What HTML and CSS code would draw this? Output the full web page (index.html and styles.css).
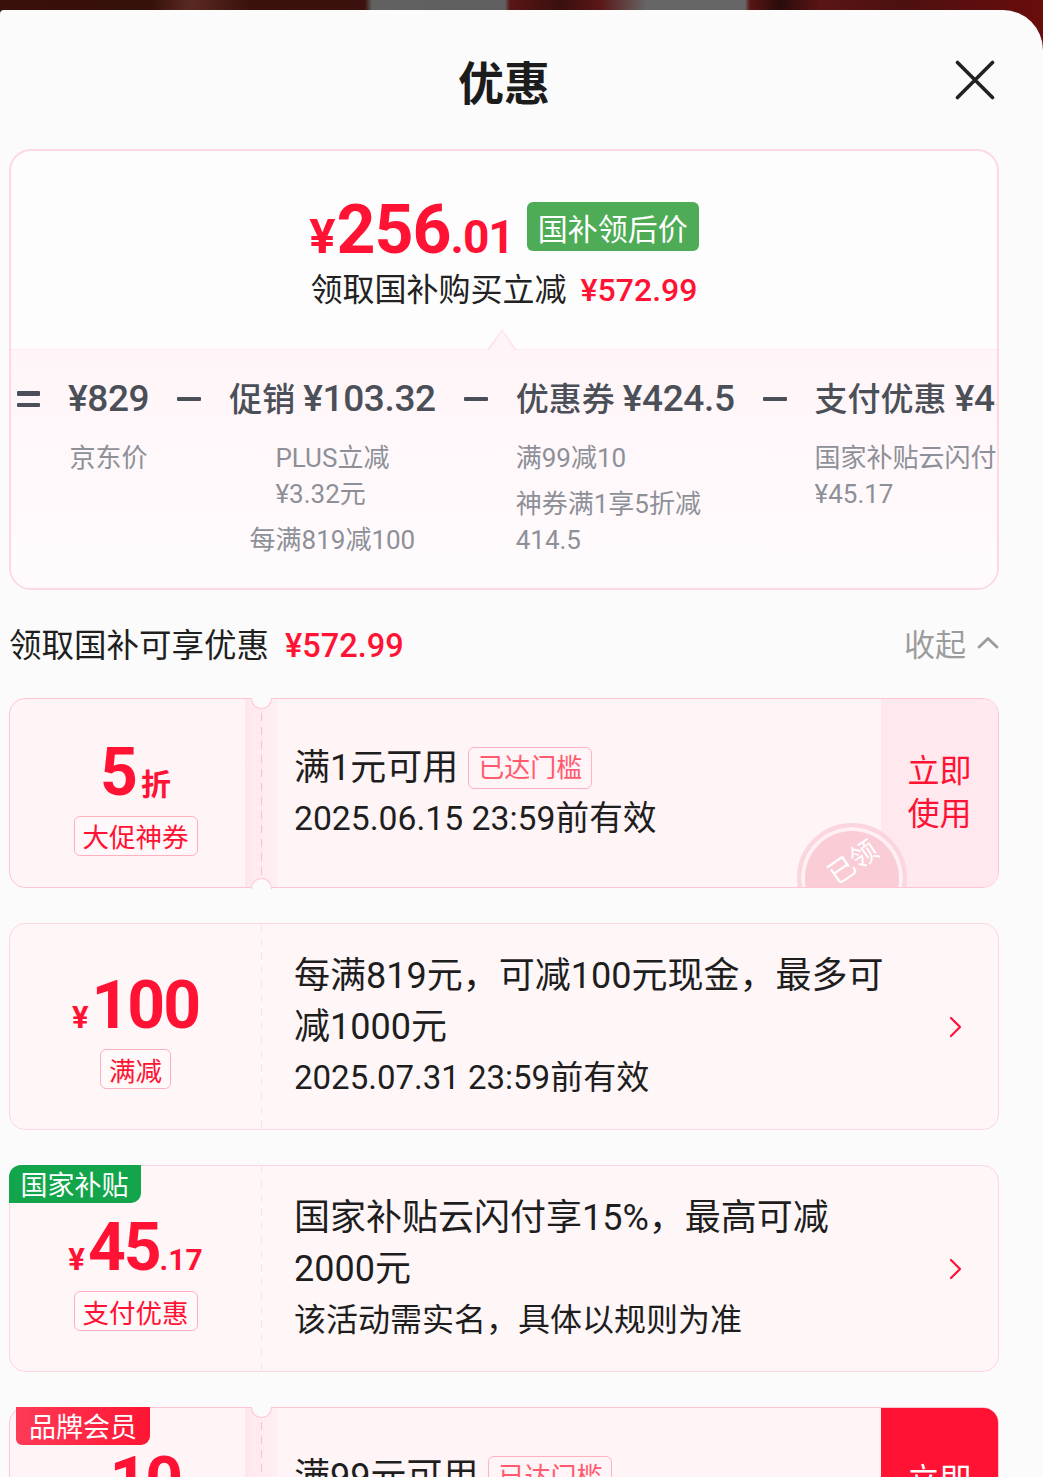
FILE: index.html
```html
<!DOCTYPE html>
<html lang="zh-CN">
<head>
<meta charset="utf-8">
<title>优惠</title>
<link rel="stylesheet" href="styles.css">
</head>
<body>
<div class="sheet">
  <header class="hd">
    <div></div>
    <h1 class="title">优惠</h1>
    <button class="close" aria-label="关闭">
      <svg width="40" height="40" viewBox="0 0 40 40"><path d="M2.5 2.5 L37.5 37.5 M37.5 2.5 L2.5 37.5" stroke="#222" stroke-width="3.6" stroke-linecap="round" fill="none"/></svg>
    </button>
  </header>

  <section class="summary">
    <div class="sum-top">
      <div class="price-row">
        <span class="price"><span class="p-yen">¥</span><span class="p-int">256</span><span class="p-dec">.01</span></span>
        <span class="badge-green">国补领后价</span>
      </div>
      <div class="save-line">领取国补购买立减 <span class="save-amt">¥572.99</span></div>
    </div>
    <div class="sum-bottom">
      <div class="bd">
        <div class="op eq"><span></span><span></span></div>
        <div class="col c-center">
          <div class="main"><span class="n">¥829</span></div>
          <div class="subs"><div class="sub">京东价</div></div>
        </div>
        <div class="op"><span></span></div>
        <div class="col c-center">
          <div class="main">促销 <span class="n">¥103.32</span></div>
          <div class="subs">
            <div class="sub">PLUS立减<br>¥3.32元</div>
            <div class="sub">每满819减100</div>
          </div>
        </div>
        <div class="op"><span></span></div>
        <div class="col">
          <div class="main">优惠券 <span class="n">¥424.5</span></div>
          <div class="subs">
            <div class="sub">满99减10</div>
            <div class="sub">神券满1享5折减<br>414.5</div>
          </div>
        </div>
        <div class="op"><span></span></div>
        <div class="col">
          <div class="main">支付优惠 <span class="n">¥45.17</span></div>
          <div class="subs">
            <div class="sub">国家补贴云闪付<br>¥45.17</div>
          </div>
        </div>
      </div>
    </div>
  </section>

  <div class="sec-hd">
    <div class="sec-title">领取国补可享优惠 <span class="sec-amt">¥572.99</span></div>
    <div class="collapse">收起
      <svg width="22" height="13" viewBox="0 0 22 13"><polyline points="2,11 11,2.5 20,11" fill="none" stroke="#9c9c9c" stroke-width="2.8" stroke-linecap="round" stroke-linejoin="round"/></svg>
    </div>
  </div>

  <div class="list">
    <!-- coupon 1 -->
    <div class="coupon c-ticket c-action">
      <span class="notch top"></span><span class="notch bottom"></span>
      <div class="stub band">
        <div class="amount"><span class="a-big">5</span><span class="a-unit">折</span></div>
        <span class="tag">大促神券</span>
      </div>
      <div class="body">
        <div class="l1">满1元可用<span class="tag-lite">已达门槛</span></div>
        <div class="l2 wide">2025.06.15 23:59前有效</div>
      </div>
      <div class="action soft">立即<br>使用</div>
      <div class="stamp"><span>已领</span></div>
    </div>

    <!-- coupon 2 -->
    <div class="coupon c-tall">
      <div class="stub faint">
        <div class="amount"><span class="a-yen">¥</span><span class="a-big">100</span></div>
        <span class="tag">满减</span>
      </div>
      <div class="body">
        <div class="l1">每满819元，可减100元现金，最多可减1000元</div>
        <div class="l2">2025.07.31 23:59前有效</div>
      </div>
      <div class="arrow">
        <svg width="13" height="22" viewBox="0 0 13 22"><polyline points="2,2 11,11 2,20" fill="none" stroke="#ff1233" stroke-width="2.2" stroke-linecap="round" stroke-linejoin="round"/></svg>
      </div>
    </div>

    <!-- coupon 3 -->
    <div class="coupon c-tall">
      <span class="corner green">国家补贴</span>
      <div class="stub faint">
        <div class="amount"><span class="a-yen">¥</span><span class="a-big">45</span><span class="a-dec">.17</span></div>
        <span class="tag">支付优惠</span>
      </div>
      <div class="body">
        <div class="l1">国家补贴云闪付享15%，最高可减2000元</div>
        <div class="l2 note">该活动需实名，具体以规则为准</div>
      </div>
      <div class="arrow">
        <svg width="13" height="22" viewBox="0 0 13 22"><polyline points="2,2 11,11 2,20" fill="none" stroke="#ff1233" stroke-width="2.2" stroke-linecap="round" stroke-linejoin="round"/></svg>
      </div>
    </div>

    <!-- coupon 4 -->
    <div class="coupon c-ticket c-action">
      <span class="notch top"></span><span class="notch bottom"></span>
      <span class="corner red">品牌会员</span>
      <div class="stub band">
        <div class="amount"><span class="a-yen">¥</span><span class="a-big">10</span></div>
        <span class="tag">店铺券</span>
      </div>
      <div class="body">
        <div class="l1">满99元可用<span class="tag-lite">已达门槛</span></div>
        <div class="l2">2025.06.30 23:59前有效</div>
      </div>
      <div class="action solid">立即<br>领取</div>
    </div>
  </div>
</div>
</body>
</html>
```

FILE: styles.css
```css
* { box-sizing: border-box; }

body {
  margin: 0;
  width: 1043px;
  height: 1477px;
  overflow: hidden;
  font-family: Roboto, "Noto Sans CJK SC", sans-serif;
  color: #1e1e1e;
  background:
    linear-gradient(90deg,
      #3a100b 0px, #35100b 150px, #5a2a22 190px, #3a110c 250px,
      #3b120d 365px, #616161 372px, #5f5f5f 505px, #5a1616 510px,
      #3a0f0e 560px, #5a1717 600px, #666 647px, #666 745px,
      #5a1515 750px, #2a0b0b 780px, #5a1515 820px, #4d1010 900px, #6a0c0c 1043px);
}

.sheet {
  margin-top: 10px;
  height: 1467px;
  background: #fbfbfb;
  border-radius: 4px 40px 0 0;
  padding: 0 44px 0 9px;
}

/* header */
.hd {
  display: grid;
  grid-template-columns: 1fr auto 1fr;
  align-items: center;
  height: 139px;
}
.title {
  margin: 0;
  font-size: 46px;
  line-height: 48px;
  font-weight: 700;
  color: #1c1c1c;
  font-family: "Noto Sans CJK SC", sans-serif;
}
.close {
  justify-self: end;
  margin-right: 4px;
  width: 40px;
  height: 40px;
  padding: 0;
  border: 0;
  background: none;
  display: flex;
}

/* summary card */
.summary {
  border: 2px solid #ffd9e2;
  border-radius: 22px;
  overflow: hidden;
  background: #fdfdfd;
}
.sum-top {
  padding: 49px 0 37px;
  text-align: center;
}
.price-row {
  display: flex;
  justify-content: center;
  align-items: flex-start;
  gap: 13px;
  height: 60px;
}
.price {
  color: #ff1233;
  font-weight: 700;
  font-size: 68px;
  line-height: 60px;
  white-space: nowrap;
}
.p-yen { font-size: 49px; line-height: 1; margin-right: 1px; }
.p-int { letter-spacing: -1px; }
.p-dec { font-size: 46px; line-height: 1; letter-spacing: -1px; }
.badge-green {
  margin-top: 2px;
  height: 49px;
  padding: 0 11px;
  display: inline-flex;
  align-items: center;
  border-radius: 6px;
  background: #4eab56;
  color: #fff;
  font-size: 30px;
  font-family: "Noto Sans CJK SC", sans-serif;
}
.save-line {
  margin-top: 8px;
  font-size: 32px;
  line-height: 44px;
  color: #222;
}
.save-amt {
  color: #ff1233;
  font-weight: 500;
  margin-left: 6px;
}

.sum-bottom {
  position: relative;
  border-top: 1px solid #ffeaf0;
  background: linear-gradient(#fff5f8, #fffbfc);
  padding: 26px 0 30px;
}
.sum-bottom::before,
.sum-bottom::after {
  content: "";
  position: absolute;
  left: 50%;
  clip-path: polygon(50% 0, 100% 100%, 0 100%);
}
.sum-bottom::before {
  top: -21px;
  width: 30px;
  height: 21px;
  margin-left: -17px;
  background: #ffe3ea;
}
.sum-bottom::after {
  top: -19px;
  width: 26px;
  height: 20px;
  margin-left: -15px;
  background: #fff5f8;
}

.bd {
  display: flex;
  align-items: flex-start;
  gap: 28px;
  padding-left: 6px;
  white-space: nowrap;
  overflow: hidden;
}
.op {
  height: 46px;
  width: 24px;
  flex: none;
  display: flex;
  flex-direction: column;
  justify-content: center;
  gap: 7px;
}
.op span {
  display: block;
  height: 4.5px;
  background: #4b4f58;
  border-radius: 1px;
}
.op.eq { width: 23px; }
.col {
  flex: none;
  display: flex;
  flex-direction: column;
  align-items: flex-start;
}
.col.c-center { align-items: center; }
.main {
  font-size: 33px;
  line-height: 46px;
  font-weight: 500;
  color: #4b4f58;
}
.main .n { font-size: 37px; letter-spacing: -0.4px; }
.subs {
  margin-top: 17px;
  display: flex;
  flex-direction: column;
  gap: 10px;
}
.c-center .subs { align-items: center; }
.sub {
  font-size: 26px;
  line-height: 36px;
  color: #8d9098;
}

/* section header */
.sec-hd {
  margin: 30px 0 34px;
  height: 44px;
  display: flex;
  align-items: center;
  justify-content: space-between;
}
.sec-title {
  font-size: 32.5px;
  color: #1f1f1f;
}
.sec-amt {
  color: #ff1233;
  font-weight: 500;
  margin-left: 8px;
}
.collapse {
  display: flex;
  align-items: center;
  gap: 11px;
  font-size: 31px;
  color: #9c9c9c;
}

/* coupons */
.list {
  display: flex;
  flex-direction: column;
  gap: 35px;
}
.coupon {
  position: relative;
  display: grid;
  grid-template-columns: 251px 1fr 100px;
  height: 207px;
  border: 1.5px solid #ffd6de;
  border-radius: 16px;
  background: #fff6f8;
}
.coupon.c-ticket {
  height: 190px;
  border-color: #ffc6d2;
  background: #fff4f6;
}
.coupon.c-action { grid-template-columns: 251px 1fr 117px; }

.notch {
  position: absolute;
  left: 241px;
  width: 21px;
  height: 11px;
  background: #fbfbfb;
  border: 1.5px solid #ffc6d2;
  z-index: 2;
}
.notch.top {
  top: -1.5px;
  border-top: 0;
  border-radius: 0 0 11px 11px;
}
.notch.bottom {
  bottom: -1.5px;
  border-bottom: 0;
  border-radius: 11px 11px 0 0;
}

.stub {
  position: relative;
  display: flex;
  flex-direction: column;
  align-items: center;
  justify-content: center;
  padding-top: 7px;
}
.stub::after {
  content: "";
  position: absolute;
  right: -1px;
  top: 0;
  bottom: 0;
  width: 1.5px;
  background: repeating-linear-gradient(#ffc0cd 0 8px, transparent 8px 14px);
}
.stub.faint::after {
  background: repeating-linear-gradient(#ffe1e8 0 8px, transparent 8px 14px);
}
.stub.band::before {
  content: "";
  position: absolute;
  right: -16px;
  top: 0;
  bottom: 0;
  width: 32px;
  background: linear-gradient(90deg, rgba(253, 226, 233, 0.7), rgba(253, 231, 236, 0.4));
}
.amount {
  position: relative;
  color: #ff1233;
  font-weight: 700;
  font-size: 66px;
  line-height: 70px;
  white-space: nowrap;
}
.a-big { letter-spacing: -2px; }
.a-unit {
  font-size: 30px;
  line-height: 1;
  margin-left: 5px;
  font-family: "Noto Sans CJK SC", sans-serif;
}
.a-yen { font-size: 31px; line-height: 1; margin-right: 3px; }
.a-dec { font-size: 30px; line-height: 1; }
.tag {
  position: relative;
  margin-top: 8px;
  height: 40px;
  padding: 0 8px;
  display: inline-flex;
  align-items: center;
  border: 1.5px solid #ffb0bf;
  border-radius: 6px;
  color: #ff1233;
  font-size: 26.5px;
  background: rgba(255, 255, 255, 0.3);
}

.body {
  padding-left: 33px;
  display: flex;
  flex-direction: column;
  justify-content: center;
}
.body .l1 {
  font-size: 36px;
  line-height: 51px;
  color: #1e1e1e;
  display: flex;
  align-items: center;
  flex-wrap: wrap;
}
.c-tall .body .l1 { display: block; }
.c-ticket .body .l1 { line-height: 52px; }
.body .l2 {
  font-size: 33px;
  line-height: 50px;
  color: #1e1e1e;
}
.body .l2.wide { font-size: 33.7px; }
.body .l2.note { font-size: 32px; }
.tag-lite {
  margin-left: 10px;
  height: 42px;
  padding: 0 9px;
  display: inline-flex;
  align-items: center;
  border: 1.5px solid #ffb3c0;
  border-radius: 6px;
  color: #ff5a6f;
  font-size: 26px;
}

.arrow {
  display: flex;
  align-items: center;
  justify-content: flex-end;
  padding-right: 36px;
}

.action {
  display: flex;
  align-items: center;
  justify-content: center;
  text-align: center;
  font-size: 32px;
  line-height: 43px;
  border-radius: 0 14.5px 14.5px 0;
}
.action.soft {
  background: #ffe8ee;
  color: #ff1233;
}
.action.solid {
  background: #ff1233;
  color: #fff;
}

.stamp {
  position: absolute;
  left: 787px;
  top: 124px;
  width: 110px;
  height: 110px;
  border-radius: 50%;
  border: 4px solid #fcd6de;
  background: #f9ccd6;
  box-shadow: inset 0 0 0 4px #fff0f3;
  clip-path: inset(0 0 46px 0);
  display: flex;
  justify-content: center;
  padding-top: 14px;
}
.stamp span {
  display: block;
  height: 40px;
  color: #fff;
  font-size: 27px;
  transform: rotate(-35deg);
}

.corner {
  position: absolute;
  z-index: 3;
  height: 38px;
  padding: 0 12px;
  display: flex;
  align-items: center;
  color: #fff;
  font-size: 27px;
}
.corner.green {
  top: -1.5px;
  left: -1.5px;
  background: #12a54b;
  border-radius: 12px 0 10px 0;
}
.corner.red {
  top: -1.5px;
  left: 6px;
  padding: 0 13px;
  background: linear-gradient(90deg, #ff3b57, #ff1533);
  border-radius: 0 0 9px 6px;
}
```
